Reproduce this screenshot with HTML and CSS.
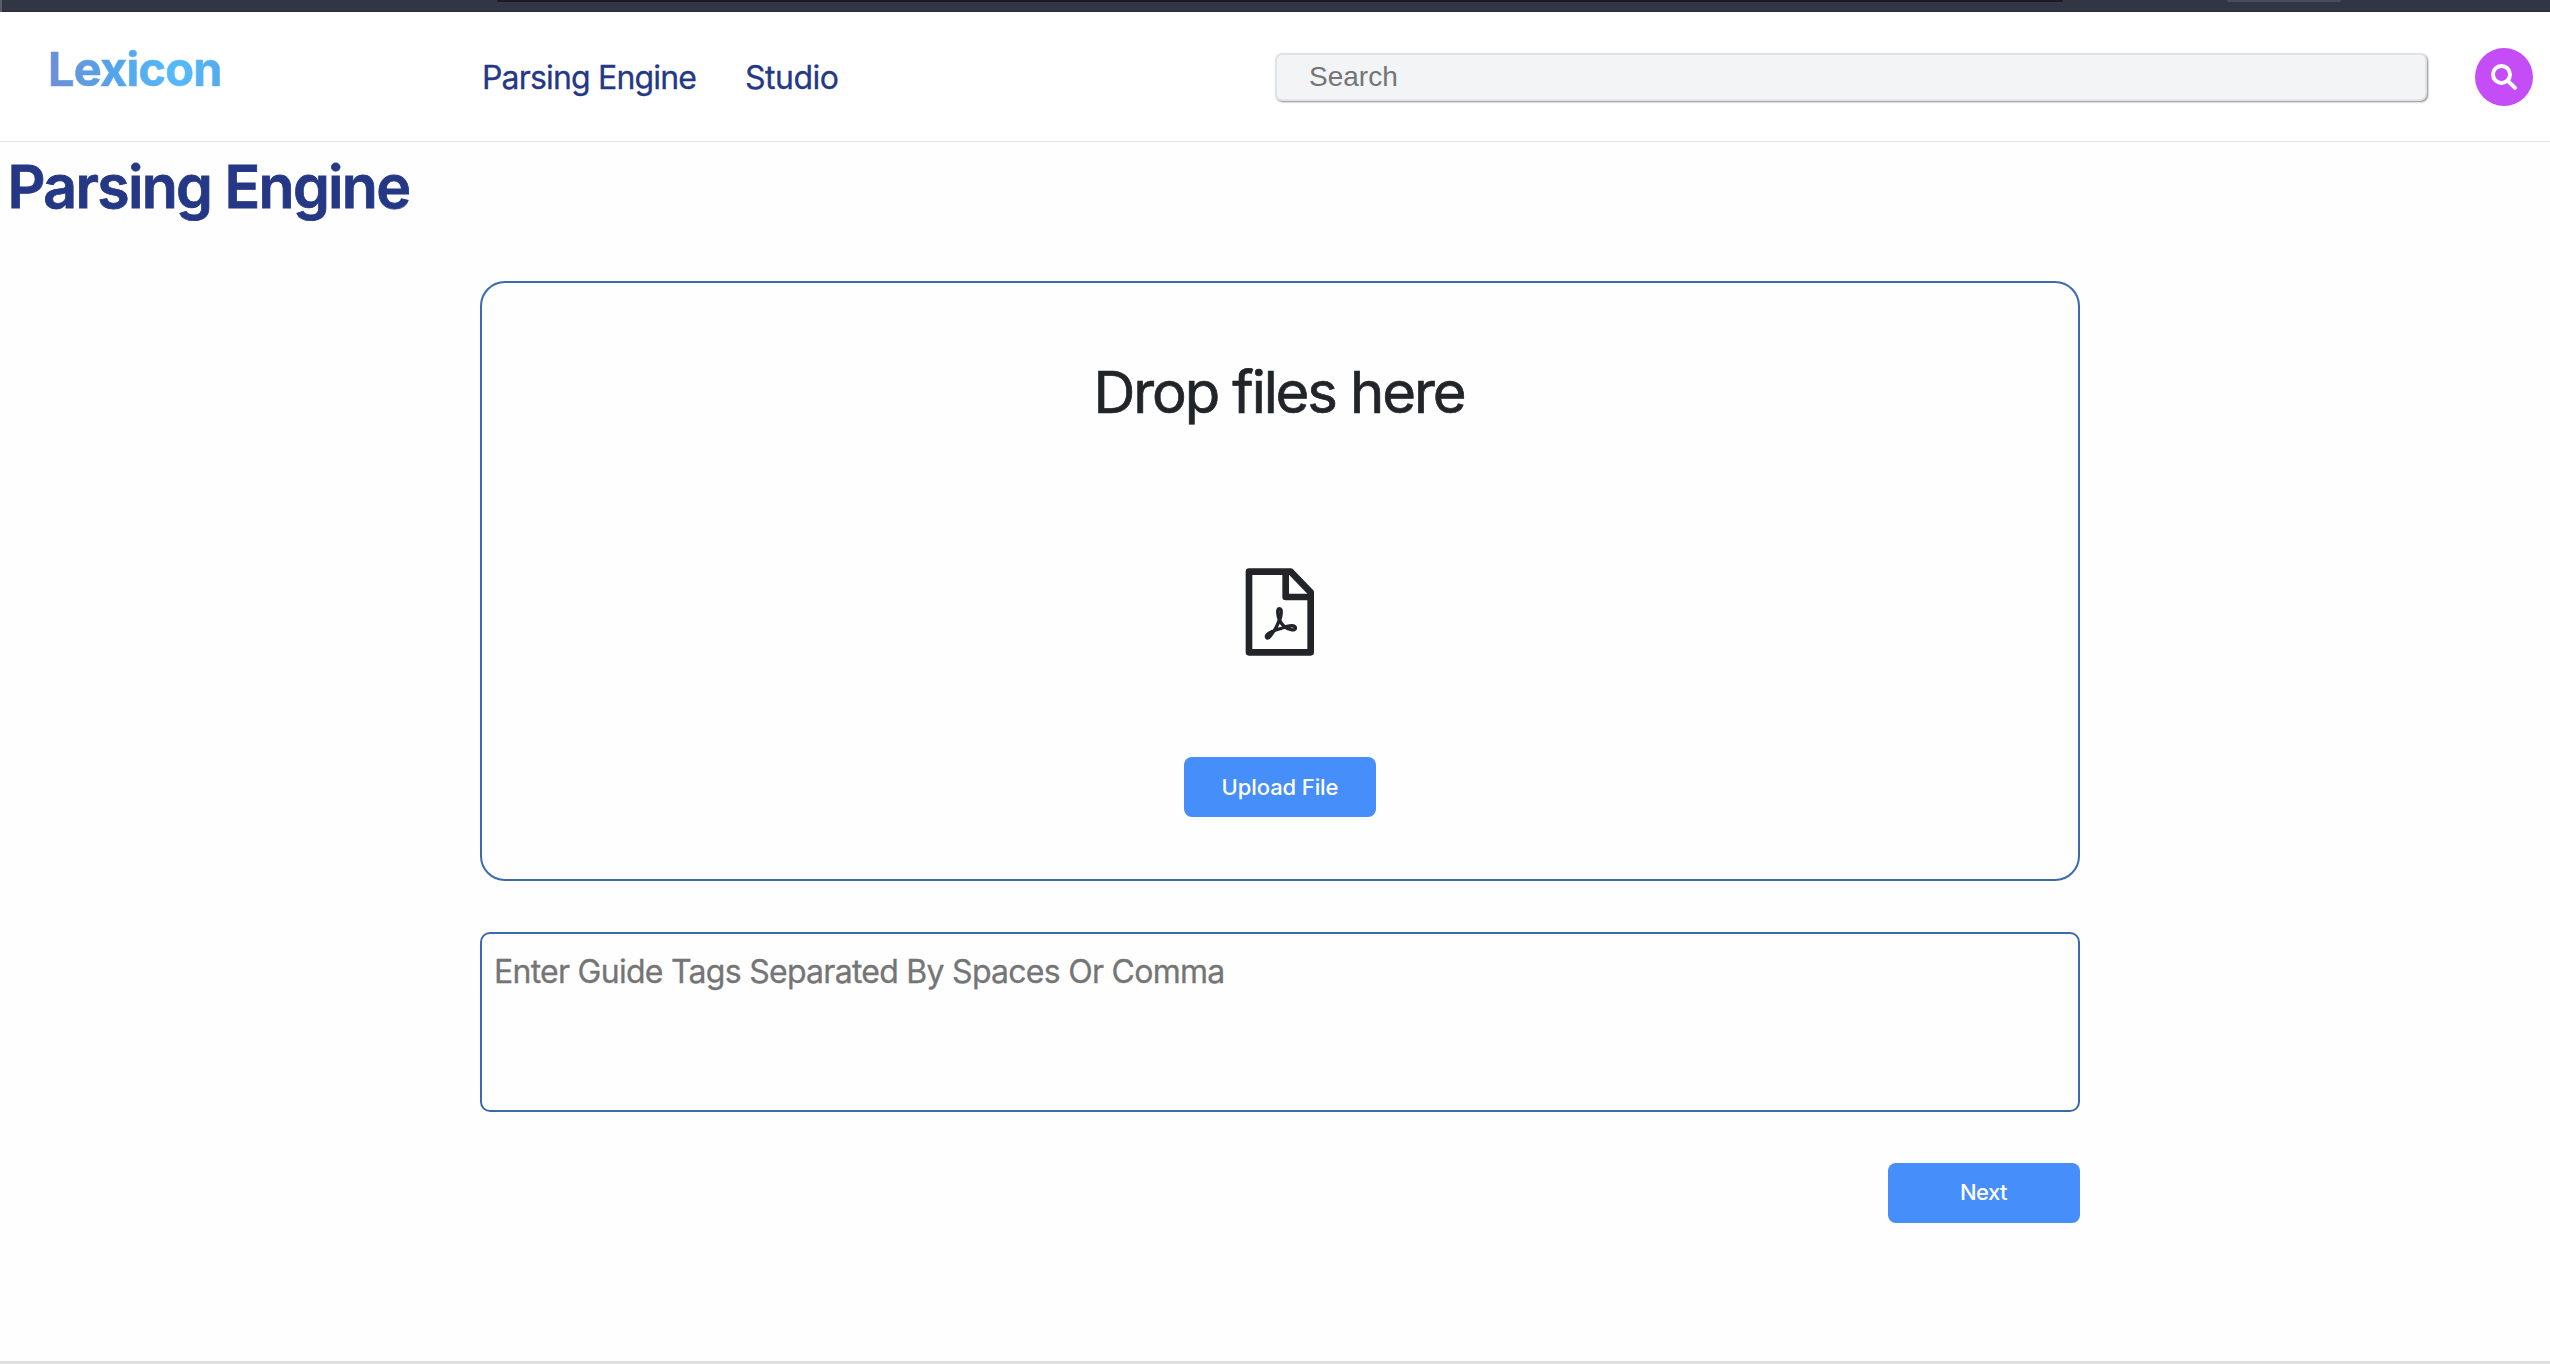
FILE: index.html
```html
<!DOCTYPE html>
<html lang="en">
<head>
<meta charset="utf-8">
<title>Lexicon</title>
<link rel="stylesheet" href="styles.css">
</head>
<body>
<div class="page">
  <div class="chrome"><span class="chrome-address"></span><span class="chrome-pill"></span></div>
  <header class="header">
    <a class="logo">Lexicon</a>
    <nav class="nav">
      <a class="nav-link">Parsing Engine</a>
      <a class="nav-link nav-link-studio">Studio</a>
    </nav>
    <input class="search" type="text" placeholder="Search">
    <button class="search-button" aria-label="Search">
      <svg class="search-icon" viewBox="0 0 58 58">
        <circle cx="26.5" cy="26.4" r="8.5"/>
        <path d="M33 33L40 39.9"/>
      </svg>
    </button>
  </header>
  <main class="main">
    <h1 class="title">Parsing Engine</h1>
    <div class="content">
      <section class="dropzone">
        <p class="drop-text">Drop files here</p>
        <svg class="pdf-icon" viewBox="0 0 300 315">
          <path class="pdf-page" d="M57 35H182L242 97V277H57Z"/>
          <path class="pdf-page" d="M167 35V111H242"/>
          <path class="pdf-mark" d="M148 180C143 166 140 146 148 146C157 146 154 166 149 180M148 178C143 198 132 214 121 228C113 239 105 232 111 224C118 215 139 209 154 205C166 200 188 194 195 200C200 207 192 211 183 209C170 207 153 195 148 178"/>
        </svg>
        <button class="button">Upload File</button>
      </section>
      <textarea class="tags" placeholder="Enter Guide Tags Separated By Spaces Or Comma"></textarea>
      <button class="button button-next">Next</button>
    </div>
  </main>
  <div class="bottom-edge"></div>
</div>
</body>
</html>
```
FILE: styles.css
```css
* {
  box-sizing: border-box;
}

body {
  margin: 0;
  background: #fefefe;
  font-family: Inter, "Liberation Sans", sans-serif;
  color: #212529;
}

.page {
  display: flex;
  flex-direction: column;
  height: 1364px;
  overflow: hidden;
}

.chrome {
  display: flex;
  align-items: flex-start;
  flex: none;
  height: 12px;
  padding-left: 495px;
  border-left: 2px solid #5c5e6a;
  background: linear-gradient(#323543 11px, #292b38 11px);
}

.chrome-address {
  width: 1566px;
  height: 2px;
  border-radius: 0 0 4px 4px;
  background: #1b1b1f;
}

.chrome-pill {
  width: 114px;
  height: 2px;
  margin-left: 164px;
  border-radius: 0 0 4px 4px;
  background: #4b4d5e;
}

.header {
  display: flex;
  align-items: flex-start;
  flex: none;
  height: 130px;
  padding-left: 48px;
  border-bottom: 1px solid #dee2e6;
  background: #fff;
}

.logo {
  width: 434px;
  margin-top: 27px;
  font-size: 47px;
  font-weight: 700;
  line-height: 60px;
  letter-spacing: -0.8px;
  color: transparent;
  background: radial-gradient(circle at 129px 32px, #55bcfb 0, #53a5ea 60px, #6c8fd8 130px);
  background-clip: text;
  -webkit-background-clip: text;
  -webkit-text-stroke: 0.6px transparent;
}

.nav {
  display: flex;
  width: 793px;
  margin-top: 41.5px;
  font-size: 32px;
  line-height: 48px;
  color: #253885;
  -webkit-text-stroke: 0.3px #253885;
}

.nav-link {
  width: 263px;
  letter-spacing: -0.83px;
}

.nav-link-studio {
  letter-spacing: -0.5px;
}

.search {
  width: 1152px;
  height: 48px;
  margin: 41px 1px 0 0;
  padding: 0 32px;
  border: 2px solid #e0e3ea;
  border-radius: 7px;
  outline: none;
  background: #f3f4f6;
  box-shadow: 1px 1px 2px #888;
  font: 28px "Liberation Sans", sans-serif;
}

.search::placeholder,
.tags::placeholder {
  color: #757575;
  opacity: 1;
}

.search-button {
  width: 58px;
  height: 58px;
  margin: 36px 0 0 47px;
  padding: 0;
  border: 0;
  border-radius: 50%;
  background: #c44df8;
}

.search-icon {
  display: block;
  fill: none;
  stroke: #fff;
  stroke-width: 4;
  stroke-linecap: round;
}

.main {
  flex: 1;
}

.title {
  margin: 8.5px 0 0 7.5px;
  font-size: 59px;
  font-weight: 600;
  line-height: 72px;
  letter-spacing: -1.7px;
  color: #253885;
  -webkit-text-stroke: 0.8px #253885;
}

.content {
  display: flex;
  flex-direction: column;
  width: 1600px;
  margin: 58.5px 0 0 480px;
}

.dropzone {
  display: flex;
  flex-direction: column;
  align-items: center;
  height: 600px;
  border: 2px solid #396ca8;
  border-radius: 25px;
}

.drop-text {
  margin: 73px 2px 0 0;
  font-size: 58px;
  line-height: 72px;
  letter-spacing: -2.1px;
  -webkit-text-stroke: 0.7px #212529;
}

.pdf-icon {
  width: 100px;
  height: 105px;
  margin-top: 132px;
  fill: none;
  stroke: #212529;
  stroke-linejoin: round;
}

.pdf-page {
  stroke-width: 20;
}

.pdf-mark {
  stroke-width: 10;
}

.button {
  width: 192px;
  height: 60px;
  flex: none;
  margin-top: 92px;
  padding: 0;
  border: 0;
  border-radius: 8px;
  background: #468ef9;
  color: #fff;
  font: 500 22px Inter, sans-serif;
  letter-spacing: -0.1px;
}

.tags {
  height: 180px;
  margin-top: 51px;
  padding: 14px 12px;
  border: 2px solid #396ca8;
  border-radius: 10px;
  outline: none;
  resize: none;
  background: transparent;
  font: 32px/48px Inter, sans-serif;
  letter-spacing: -0.73px;
  -webkit-text-stroke: 0.3px #757575;
}

.button-next {
  align-self: flex-end;
  margin-top: 51px;
  padding: 0 1px 2px 0;
  letter-spacing: -0.6px;
}

.bottom-edge {
  flex: none;
  height: 3px;
  background: #e0e0e0;
}
```
